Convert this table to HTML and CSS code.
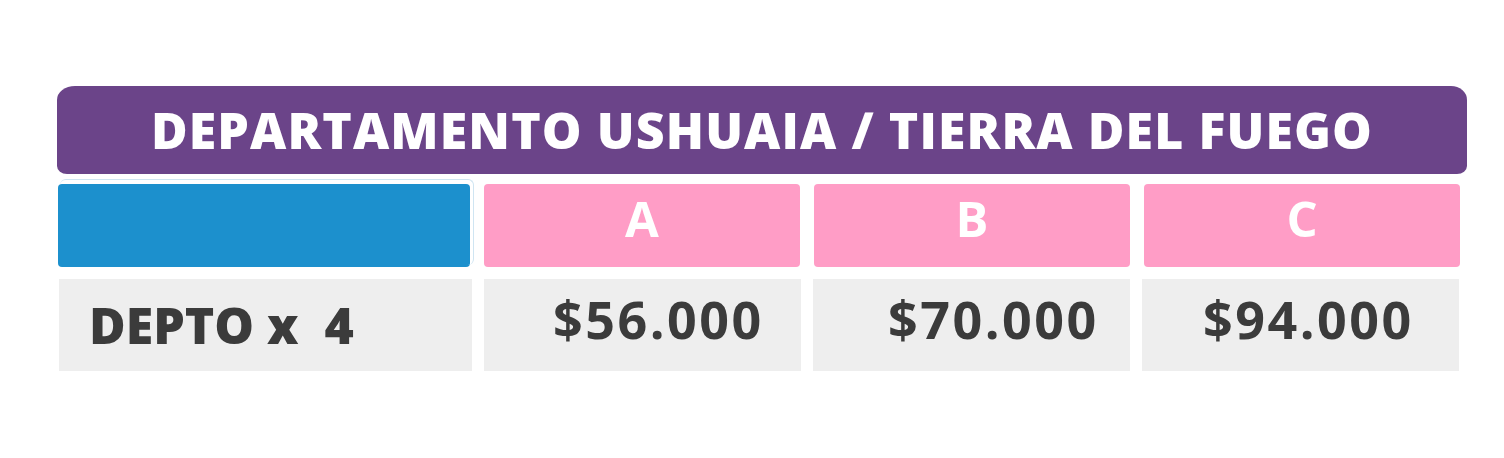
FILE: index.html
```html
<!DOCTYPE html>
<html lang="es">
<head>
<meta charset="utf-8">
<title>Departamento Ushuaia</title>
<link rel="stylesheet" href="styles.css">
</head>
<body>
<main class="table">
  <h1 class="title">DEPARTAMENTO USHUAIA / TIERRA DEL FUEGO</h1>
  <div class="head-row">
    <div class="head-cell head-blank"></div>
    <div class="head-cell head-cat">A</div>
    <div class="head-cell head-cat">B</div>
    <div class="head-cell head-cat">C</div>
  </div>
  <div class="price-row">
    <div class="price-cell price-label">DEPTO x&nbsp; 4</div>
    <div class="price-cell price-a">$56.000</div>
    <div class="price-cell price-b">$70.000</div>
    <div class="price-cell price-c">$94.000</div>
  </div>
</main>
</body>
</html>
```

FILE: styles.css
```css
html, body {
  margin: 0;
  padding: 0;
  background: #ffffff;
}

body {
  font-family: "Open Sans", "DejaVu Sans", sans-serif;
}

.table {
  display: flex;
  flex-direction: column;
  padding: 86px 0 0 57px;
  width: 1410px;
}

.title {
  margin: 0;
  height: 88px;
  display: flex;
  align-items: center;
  justify-content: center;
  background: #6b4489;
  border-radius: 18px 16px 10px 10px / 14px 14px 8px 8px;
  color: #ffffff;
  font-size: 50px;
  font-weight: 800;
  line-height: 1;
  letter-spacing: 1.1px;
}

.head-row {
  margin-top: 10px;
  margin-left: 1px;
  display: grid;
  grid-template-columns: 412px 316px 316px 316px;
  column-gap: 14px;
}

.head-cell {
  height: 83px;
  border-radius: 4px;
  display: flex;
  align-items: center;
  justify-content: center;
  box-sizing: border-box;
  padding-bottom: 14px;
  color: #ffffff;
  font-size: 49px;
  font-weight: 700;
  line-height: 1;
}

.head-blank {
  background: #1c90cd;
  position: relative;
}

.head-blank::before {
  content: "";
  position: absolute;
  top: -5px;
  right: -4px;
  bottom: 2px;
  left: 2px;
  border-top: 1px solid #cfe5f2;
  border-right: 1px solid #cfe5f2;
  border-radius: 6px;
}

.head-cat {
  background: #ff9dc6;
}

.price-row {
  margin-top: 12px;
  margin-left: 2px;
  display: grid;
  grid-template-columns: 413px 317px 317px 317px;
  column-gap: 12px;
}

.price-cell {
  height: 92px;
  background: #eeeeee;
  display: flex;
  align-items: center;
  box-sizing: border-box;
  color: #3b3b3b;
  font-weight: 700;
  line-height: 1;
}

.price-label {
  padding-left: 30px;
  font-size: 50px;
  font-weight: 800;
}

.price-a,
.price-b,
.price-c {
  font-size: 52px;
  letter-spacing: 2.5px;
  padding-bottom: 13px;
}

.price-a {
  padding-left: 69px;
}

.price-b {
  padding-left: 75px;
}

.price-c {
  padding-left: 61px;
}
```
